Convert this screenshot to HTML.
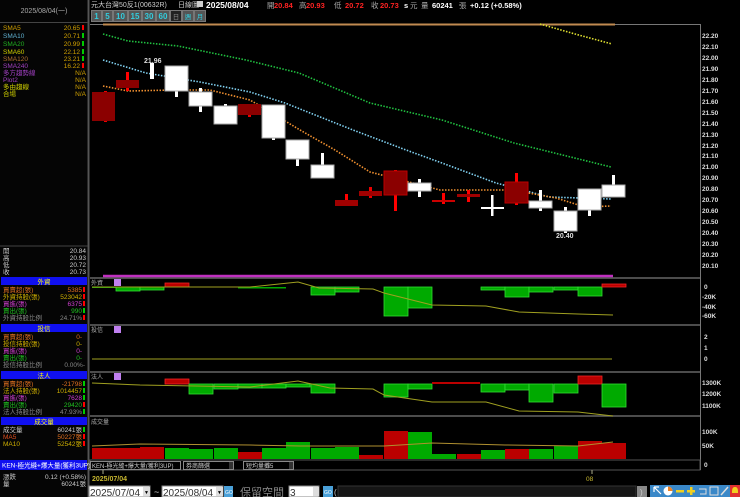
<!DOCTYPE html>
<html><head><meta charset="utf-8">
<style>
html,body{margin:0;padding:0;background:#000;width:740px;height:497px;overflow:hidden}
svg{display:block}
text{font-family:"Liberation Sans","Noto Sans CJK TC",sans-serif}
</style></head><body>
<svg width="740" height="497" viewBox="0 0 740 497" xmlns="http://www.w3.org/2000/svg">
<rect width="740" height="497" fill="#000"/>
<!-- left panel -->
<rect x="0" y="0" width="87" height="497" fill="#050505"/>
<line x1="88.5" y1="0" x2="88.5" y2="497" stroke="#555" stroke-width="2"/>
<line x1="0" y1="22.5" x2="88" y2="22.5" stroke="#444"/>
<text x="44" y="13" font-size="7" fill="#aaa" text-anchor="middle">2025/08/04(一)</text>
<g font-size="6.5">
<text x="3" y="30" fill="#d0a000">SMA5</text><text x="80" y="30" fill="#d0a000" text-anchor="end">20.65</text><rect x="82" y="25" width="2" height="5" fill="#f00"/>
<text x="3" y="38" fill="#60b0d0">SMA10</text><text x="80" y="38" fill="#d0a000" text-anchor="end">20.71</text><rect x="82" y="33" width="2" height="5" fill="#0c0"/>
<text x="3" y="46" fill="#20b020">SMA20</text><text x="80" y="46" fill="#d0a000" text-anchor="end">20.99</text><rect x="82" y="41" width="2" height="5" fill="#0c0"/>
<text x="3" y="54" fill="#d0d000">SMA60</text><text x="80" y="54" fill="#d0a000" text-anchor="end">22.12</text><rect x="82" y="49" width="2" height="5" fill="#0c0"/>
<text x="3" y="61" fill="#b07030">SMA120</text><text x="80" y="61" fill="#d0a000" text-anchor="end">23.21</text><rect x="82" y="56" width="2" height="5" fill="#0c0"/>
<text x="3" y="68" fill="#a040c0">SMA240</text><text x="80" y="68" fill="#d0a000" text-anchor="end">16.22</text><rect x="82" y="63" width="2" height="5" fill="#f00"/>
<text x="3" y="75" fill="#a040c0">多方趨勢線</text><text x="86" y="75" fill="#d0a000" text-anchor="end">N/A</text>
<text x="3" y="82" fill="#a040c0">Plot2</text><text x="86" y="82" fill="#d0a000" text-anchor="end">N/A</text>
<text x="3" y="89" fill="#d0d000">多由趨線</text><text x="86" y="89" fill="#d0a000" text-anchor="end">N/A</text>
<text x="3" y="96" fill="#d0d000">合場</text><text x="86" y="96" fill="#d0a000" text-anchor="end">N/A</text>
</g>
<line x1="0" y1="246" x2="88" y2="246" stroke="#444"/>
<g font-size="6.5" fill="#ccc">
<text x="3" y="253">開</text><text x="86" y="253" text-anchor="end">20.84</text>
<text x="3" y="260">高</text><text x="86" y="260" text-anchor="end">20.93</text>
<text x="3" y="267">低</text><text x="86" y="267" text-anchor="end">20.72</text>
<text x="3" y="274">收</text><text x="86" y="274" text-anchor="end">20.73</text>
</g>
<!-- 外資 -->
<rect x="1" y="277" width="86" height="8" fill="#1010f0"/><text x="44" y="284" font-size="6.5" fill="#ff0" text-anchor="middle">外資</text>
<g font-size="6.5">
<text x="3" y="292" fill="#e07020">買賣超(張)</text><text x="82" y="292" fill="#e07020" text-anchor="end">5385</text><rect x="83" y="287" width="2" height="5" fill="#f00"/>
<text x="3" y="299" fill="#d0b000">外資持股(張)</text><text x="82" y="299" fill="#d0b000" text-anchor="end">523042</text><rect x="83" y="294" width="2" height="5" fill="#f00"/>
<text x="3" y="306" fill="#d040d0">買進(張)</text><text x="82" y="306" fill="#d040d0" text-anchor="end">6375</text><rect x="83" y="301" width="2" height="5" fill="#f00"/>
<text x="3" y="313" fill="#20c020">賣出(張)</text><text x="82" y="313" fill="#20c020" text-anchor="end">990</text><rect x="83" y="308" width="2" height="5" fill="#0c0"/>
<text x="3" y="320" fill="#888">外資持股比例</text><text x="82" y="320" fill="#888" text-anchor="end">24.71%</text><rect x="83" y="315" width="2" height="5" fill="#f00"/>
</g>
<rect x="1" y="324" width="86" height="8" fill="#1010f0"/><text x="44" y="331" font-size="6.5" fill="#ff0" text-anchor="middle">投信</text>
<g font-size="6.5">
<text x="3" y="339" fill="#e07020">買賣超(張)</text><text x="82" y="339" fill="#e07020" text-anchor="end">0-</text>
<text x="3" y="346" fill="#d0b000">投信持股(張)</text><text x="82" y="346" fill="#d0b000" text-anchor="end">0-</text>
<text x="3" y="353" fill="#d040d0">買進(張)</text><text x="82" y="353" fill="#d040d0" text-anchor="end">0-</text>
<text x="3" y="360" fill="#20c020">賣出(張)</text><text x="82" y="360" fill="#20c020" text-anchor="end">0-</text>
<text x="3" y="367" fill="#888">投信持股比例</text><text x="85" y="367" fill="#888" text-anchor="end">0.00%-</text>
</g>
<rect x="1" y="371" width="86" height="8" fill="#1010f0"/><text x="44" y="378" font-size="6.5" fill="#ff0" text-anchor="middle">法人</text>
<g font-size="6.5">
<text x="3" y="386" fill="#e07020">買賣超(張)</text><text x="82" y="386" fill="#e07020" text-anchor="end">-21798</text><rect x="83" y="381" width="2" height="5" fill="#0c0"/>
<text x="3" y="393" fill="#d0b000">法人持股(張)</text><text x="82" y="393" fill="#d0b000" text-anchor="end">1014457</text><rect x="83" y="388" width="2" height="5" fill="#0c0"/>
<text x="3" y="400" fill="#d040d0">買進(張)</text><text x="82" y="400" fill="#d040d0" text-anchor="end">7628</text><rect x="83" y="395" width="2" height="5" fill="#0c0"/>
<text x="3" y="407" fill="#20c020">賣出(張)</text><text x="82" y="407" fill="#20c020" text-anchor="end">29420</text><rect x="83" y="402" width="2" height="5" fill="#f00"/>
<text x="3" y="414" fill="#888">法人持股比例</text><text x="82" y="414" fill="#888" text-anchor="end">47.93%</text><rect x="83" y="409" width="2" height="5" fill="#0c0"/>
</g>
<rect x="1" y="417" width="86" height="8" fill="#1010f0"/><text x="44" y="424" font-size="6.5" fill="#ff0" text-anchor="middle">成交量</text>
<g font-size="6.5">
<text x="3" y="432" fill="#ccc">成交量</text><text x="82" y="432" fill="#ccc" text-anchor="end">60241張</text><rect x="83" y="427" width="2" height="5" fill="#0c0"/>
<text x="3" y="439" fill="#e05020">MA5</text><text x="82" y="439" fill="#e07020" text-anchor="end">50227張</text><rect x="83" y="434" width="2" height="5" fill="#f00"/>
<text x="3" y="446" fill="#d0b000">MA10</text><text x="82" y="446" fill="#d0b000" text-anchor="end">52542張</text><rect x="83" y="441" width="2" height="5" fill="#f00"/>
</g>
<rect x="0" y="460" width="87" height="10" fill="#1010f0"/>
<text x="2" y="467.5" font-size="6.5" fill="#fff">KEN-極光縫+爆大量(獲利3UP)</text>
<g font-size="6.5" fill="#ccc">
<text x="3" y="479">漲跌</text><text x="86" y="479" text-anchor="end">0.12 (+0.58%)</text>
<text x="3" y="486">量</text><text x="86" y="486" text-anchor="end">60241張</text>
</g>

<!-- top header -->
<text x="91" y="7" font-size="7" fill="#ccc">元大台灣50反1(00632R)</text>
<text x="178" y="7" font-size="7" fill="#ccc">日線圖</text>
<rect x="197" y="1" width="6" height="6" fill="#ccc"/>
<text x="206" y="8" font-size="8.5" font-weight="bold" fill="#fff">2025/08/04</text>
<g font-size="7.5" font-weight="bold">
<text x="267" y="8" fill="#aaa" font-weight="normal">開</text><text x="274" y="8" fill="#f22">20.84</text>
<text x="299" y="8" fill="#aaa" font-weight="normal">高</text><text x="306" y="8" fill="#f22">20.93</text>
<text x="334" y="8" fill="#aaa" font-weight="normal">低</text><text x="345" y="8" fill="#f22">20.72</text>
<text x="371" y="8" fill="#aaa" font-weight="normal">收</text><text x="380" y="8" fill="#f22">20.73</text>
<text x="404" y="8" fill="#fff">s</text><text x="410" y="8" fill="#aaa" font-weight="normal">元</text>
<text x="421" y="8" fill="#aaa" font-weight="normal">量</text><text x="432" y="8" fill="#fff">60241</text>
<text x="459" y="8" fill="#aaa" font-weight="normal">張</text><text x="470" y="8" fill="#fff">+0.12 (+0.58%)</text>
</g>
<!-- period buttons -->
<g font-size="8" font-weight="bold" text-anchor="middle">
<rect x="91" y="10" width="115" height="12" fill="#4a4a4a"/>
<rect x="91.5" y="10.5" width="10" height="11" fill="#555" stroke="#777"/><text x="96.5" y="19" fill="#3cd">1</text>
<rect x="102.5" y="10.5" width="10" height="11" fill="#555" stroke="#777"/><text x="107.5" y="19" fill="#3cd">5</text>
<rect x="113.5" y="10.5" width="14" height="11" fill="#555" stroke="#777"/><text x="120.5" y="19" fill="#3cd">10</text>
<rect x="128.5" y="10.5" width="13" height="11" fill="#555" stroke="#777"/><text x="135" y="19" fill="#3cd">15</text>
<rect x="142.5" y="10.5" width="13" height="11" fill="#555" stroke="#777"/><text x="149" y="19" fill="#3cd">30</text>
<rect x="156.5" y="10.5" width="13" height="11" fill="#555" stroke="#777"/><text x="163" y="19" fill="#3cd">60</text>
<rect x="170.5" y="10.5" width="11" height="11" fill="#222" stroke="#777"/><text x="176" y="19" fill="#888" font-size="6.5" font-weight="normal">日</text>
<rect x="182.5" y="10.5" width="11" height="11" fill="#555" stroke="#777"/><text x="188" y="19" fill="#3cd" font-size="6.5" font-weight="normal">週</text>
<rect x="194.5" y="10.5" width="11" height="11" fill="#555" stroke="#777"/><text x="200" y="19" fill="#3cd" font-size="6.5" font-weight="normal">月</text>
</g>

<!-- chart frames -->
<line x1="90" y1="24.5" x2="700" y2="24.5" stroke="#777"/>
<line x1="103" y1="24.5" x2="615" y2="24.5" stroke="#c08a50" stroke-width="2"/>
<line x1="700.5" y1="24" x2="700.5" y2="470" stroke="#777"/>
<g stroke="#666" stroke-width="1.5">
<line x1="90" y1="278" x2="700" y2="278"/>
<line x1="90" y1="325" x2="700" y2="325"/>
<line x1="90" y1="372" x2="700" y2="372"/>
<line x1="90" y1="416" x2="700" y2="416"/>
</g>
<line x1="103" y1="276" x2="613" y2="276" stroke="#c030c0" stroke-width="2.5"/>
<!-- price axis -->
<g font-size="6.5" fill="#ddd" font-weight="bold">
<text x="702" y="38">22.20</text><text x="702" y="49">22.10</text><text x="702" y="60">22.00</text><text x="702" y="71">21.90</text>
<text x="702" y="82">21.80</text><text x="702" y="93">21.70</text><text x="702" y="104">21.60</text><text x="702" y="115">21.50</text>
<text x="702" y="126">21.40</text><text x="702" y="137">21.30</text><text x="702" y="148">21.20</text><text x="702" y="158">21.10</text>
<text x="702" y="169">21.00</text><text x="702" y="180">20.90</text><text x="702" y="191">20.80</text><text x="702" y="202">20.70</text>
<text x="702" y="213">20.60</text><text x="702" y="224">20.50</text><text x="702" y="235">20.40</text><text x="702" y="246">20.30</text>
<text x="702" y="257">20.20</text><text x="702" y="268">20.10</text>
<text x="704" y="289">0</text><text x="702" y="299">-20K</text><text x="702" y="309">-40K</text><text x="702" y="318">-60K</text>
<text x="704" y="339">2</text><text x="704" y="350">1</text><text x="704" y="361">0</text>
<text x="702" y="385">1300K</text><text x="702" y="396">1200K</text><text x="702" y="408">1100K</text>
<text x="702" y="434">100K</text><text x="702" y="448">50K</text><text x="704" y="467">0</text>
</g>

<!-- MAs -->
<g fill="none" stroke-dasharray="1.5 1.5" stroke-width="1.6">
<polyline stroke="#20c040" points="103,34 128,41 178,46 246,60 299,73 370,103 442,120 514,143 611,167"/>
<polyline stroke="#80d0f0" points="103,60 146,73 200,82 250,92 285,103 353,130 406,150 442,163 496,183 549,197 611,199"/>
<polyline stroke="#f09030" points="103,86 128,91 174,90 210,90 250,100 262,107 300,130 335,150 370,172 440,190 512,190 556,198 585,207 611,206"/>
<polyline stroke="#e0e030" points="540,24 575,34 612,44"/>
</g>

<!-- candles -->
<g>
<rect x="104" y="91" width="3" height="31" fill="#e00"/><rect x="92" y="92" width="23" height="29" fill="#8b0000"/>
<rect x="126" y="72" width="3" height="19" fill="#f00"/><rect x="116" y="80" width="23" height="8" fill="#8b0000"/>
<rect x="150" y="63" width="4" height="16" fill="#fff"/>
<rect x="175" y="66" width="3" height="31" fill="#fff"/><rect x="165" y="66" width="23" height="25" fill="#fff" stroke="#aaa"/>
<rect x="199" y="88" width="3" height="24" fill="#fff"/><rect x="189" y="92" width="23" height="14" fill="#fff" stroke="#aaa"/>
<rect x="224" y="104" width="3" height="4" fill="#fff"/><rect x="214" y="106" width="23" height="18" fill="#fff" stroke="#aaa"/>
<rect x="248" y="104" width="3" height="13" fill="#e00"/><rect x="238" y="104" width="23" height="11" fill="#8b0000"/>
<rect x="272" y="105" width="3" height="35" fill="#fff"/><rect x="262" y="105" width="23" height="33" fill="#fff" stroke="#aaa"/>
<rect x="296" y="140" width="3" height="26" fill="#fff"/><rect x="286" y="140" width="23" height="19" fill="#fff" stroke="#aaa"/>
<rect x="321" y="153" width="3" height="14" fill="#fff"/><rect x="311" y="165" width="23" height="13" fill="#fff" stroke="#aaa"/>
<rect x="345" y="194" width="3" height="8" fill="#f00"/><rect x="335" y="200" width="23" height="6" fill="#a00000"/>
<rect x="369" y="187" width="3" height="11" fill="#e00"/><rect x="359" y="191" width="23" height="5" fill="#a00000"/>
<rect x="394" y="170" width="3" height="41" fill="#f00"/><rect x="384" y="171" width="23" height="24" fill="#8b0000" stroke="#b00"/>
<rect x="418" y="179" width="3" height="18" fill="#fff"/><rect x="408" y="183" width="23" height="8" fill="#fff" stroke="#aaa"/>
<rect x="442" y="193" width="3" height="11" fill="#f00"/><rect x="432" y="200" width="23" height="2" fill="#c00"/>
<rect x="467" y="190" width="3" height="12" fill="#f00"/><rect x="457" y="194" width="23" height="3" fill="#a00000"/>
<rect x="491" y="195" width="2.5" height="21" fill="#fff"/><rect x="481" y="207" width="23" height="2" fill="#fff"/>
<rect x="515" y="173" width="3" height="32" fill="#f00"/><rect x="505" y="182" width="23" height="21" fill="#8b0000" stroke="#b00"/>
<rect x="539" y="190" width="3" height="21" fill="#fff"/><rect x="529" y="201" width="23" height="7" fill="#fff" stroke="#aaa"/>
<rect x="564" y="207" width="3" height="26" fill="#fff"/><rect x="554" y="211" width="23" height="20" fill="#fff" stroke="#aaa"/>
<rect x="588" y="189" width="3" height="27" fill="#fff"/><rect x="578" y="189" width="23" height="21" fill="#fff" stroke="#aaa"/>
<rect x="612" y="175" width="3" height="22" fill="#fff"/><rect x="602" y="185" width="23" height="12" fill="#fff" stroke="#aaa"/>
</g>
<text x="144" y="63" font-size="7" fill="#ddd" font-weight="bold">21.96</text>
<text x="556" y="238" font-size="7" fill="#ddd" font-weight="bold">20.40</text>

<!-- panel 1 外資 -->
<text x="91" y="285" font-size="6" fill="#aaa">外資</text><rect x="114" y="279" width="7" height="7" fill="#c080f0"/>
<g stroke-width="0.8">
<rect x="92" y="287" width="24" height="1" fill="#0a0"/>
<rect x="116" y="287" width="24" height="4" fill="#0a0" stroke="#3d3"/>
<rect x="140" y="287" width="24" height="3" fill="#0a0" stroke="#3d3"/>
<rect x="165" y="283" width="24" height="4" fill="#b00" stroke="#e22"/>
<rect x="238" y="287" width="24" height="1.5" fill="#0a0"/>
<rect x="262" y="287" width="24" height="1.5" fill="#0a0"/>
<rect x="311" y="287" width="24" height="8" fill="#0a0" stroke="#3d3"/>
<rect x="335" y="287" width="24" height="5" fill="#0a0" stroke="#3d3"/>
<rect x="384" y="287" width="24" height="29" fill="#0a0" stroke="#3d3"/>
<rect x="408" y="287" width="24" height="21" fill="#0a0" stroke="#3d3"/>
<rect x="481" y="287" width="24" height="3" fill="#0a0" stroke="#3d3"/>
<rect x="505" y="287" width="24" height="10" fill="#0a0" stroke="#3d3"/>
<rect x="529" y="287" width="24" height="5" fill="#0a0" stroke="#3d3"/>
<rect x="554" y="287" width="24" height="3" fill="#0a0" stroke="#3d3"/>
<rect x="578" y="287" width="24" height="9" fill="#0a0" stroke="#3d3"/>
<rect x="602" y="284" width="24" height="3" fill="#b00" stroke="#e22"/>
</g>
<polyline fill="none" stroke="#a0a020" stroke-width="1" points="92,287 250,287 298,282 319,288 373,289 384,293 432,305 486,306 519,312 578,314 613,315"/>

<!-- panel 2 投信 -->
<text x="91" y="332" font-size="6" fill="#aaa">投信</text><rect x="114" y="326" width="7" height="7" fill="#c080f0"/>
<line x1="92" y1="359" x2="612" y2="359" stroke="#a0a020"/>

<!-- panel 3 法人 -->
<text x="91" y="379" font-size="6" fill="#aaa">法人</text><rect x="114" y="373" width="7" height="7" fill="#c080f0"/>
<g stroke-width="0.8">
<rect x="165" y="379" width="24" height="5" fill="#b00" stroke="#e22"/>
<rect x="189" y="384" width="24" height="10" fill="#0a0" stroke="#3d3"/>
<rect x="214" y="384" width="24" height="5" fill="#0a0" stroke="#3d3"/>
<rect x="238" y="384" width="24" height="4" fill="#0a0" stroke="#3d3"/>
<rect x="262" y="384" width="24" height="4" fill="#0a0" stroke="#3d3"/>
<rect x="286" y="384" width="24" height="3" fill="#0a0" stroke="#3d3"/>
<rect x="311" y="384" width="24" height="9" fill="#0a0" stroke="#3d3"/>
<rect x="384" y="384" width="24" height="13" fill="#0a0" stroke="#3d3"/>
<rect x="408" y="384" width="24" height="5" fill="#0a0" stroke="#3d3"/>
<rect x="432" y="382" width="48" height="2" fill="#b00"/>
<rect x="481" y="384" width="24" height="8" fill="#0a0" stroke="#3d3"/>
<rect x="505" y="384" width="24" height="6" fill="#0a0" stroke="#3d3"/>
<rect x="529" y="384" width="24" height="18" fill="#0a0" stroke="#3d3"/>
<rect x="554" y="384" width="24" height="9" fill="#0a0" stroke="#3d3"/>
<rect x="578" y="376" width="24" height="8" fill="#b00" stroke="#e22"/>
<rect x="602" y="384" width="24" height="23" fill="#0a0" stroke="#3d3"/>
</g>
<polyline fill="none" stroke="#a0a020" stroke-width="1" points="92,383 140,385 250,387 298,381 330,388 373,389 384,395 432,402 486,402 519,411 578,412 613,416"/>

<!-- panel 4 成交量 -->
<text x="91" y="424" font-size="6" fill="#aaa">成交量</text>
<g>
<rect x="92" y="448" width="24" height="11" fill="#b00"/>
<rect x="116" y="448" width="24" height="11" fill="#b00"/>
<rect x="140" y="447" width="24" height="12" fill="#b00"/>
<rect x="165" y="448" width="24" height="11" fill="#0a0"/>
<rect x="189" y="449" width="24" height="10" fill="#0a0"/>
<rect x="214" y="448" width="24" height="11" fill="#0a0"/>
<rect x="238" y="452" width="24" height="7" fill="#b00"/>
<rect x="262" y="448" width="24" height="11" fill="#0a0"/>
<rect x="286" y="442" width="24" height="17" fill="#0a0"/>
<rect x="311" y="448" width="24" height="11" fill="#0a0"/>
<rect x="335" y="447" width="24" height="12" fill="#0a0"/>
<rect x="359" y="455" width="24" height="4" fill="#b00"/>
<rect x="384" y="431" width="24" height="28" fill="#b00"/>
<rect x="408" y="432" width="24" height="27" fill="#0a0"/>
<rect x="432" y="454" width="24" height="5" fill="#0a0"/>
<rect x="457" y="454" width="24" height="5" fill="#b00"/>
<rect x="481" y="450" width="24" height="9" fill="#0a0"/>
<rect x="505" y="449" width="24" height="10" fill="#b00"/>
<rect x="529" y="449" width="24" height="10" fill="#0a0"/>
<rect x="554" y="446" width="24" height="13" fill="#0a0"/>
<rect x="578" y="441" width="24" height="18" fill="#b00"/>
<rect x="602" y="443" width="24" height="16" fill="#b00"/>
</g>
<polyline fill="none" stroke="#b09030" stroke-width="1" points="92,446 140,444 250,445 300,446 384,446 432,443 505,445 578,446 613,442"/>

<!-- KEN row -->
<rect x="90" y="460" width="610" height="10" fill="#000" stroke="#555"/>
<rect x="90.5" y="461.5" width="90" height="8" fill="#000" stroke="#888"/>
<text x="92" y="468" font-size="6" fill="#ccc">KEN-極光縫+爆大量(獲利3UP)</text>
<rect x="183.5" y="461.5" width="50" height="8" fill="#000" stroke="#888"/>
<text x="186" y="468" font-size="6" fill="#ccc">券商篩選</text><rect x="229" y="462" width="4" height="7" fill="#333"/>
<rect x="243.5" y="461.5" width="50" height="8" fill="#000" stroke="#888"/>
<text x="246" y="468" font-size="6" fill="#ccc">短均量攤5</text><rect x="289" y="462" width="4" height="7" fill="#333"/>
<line x1="103" y1="470" x2="103" y2="474" stroke="#aa8"/>
<line x1="592" y1="470" x2="592" y2="474" stroke="#aa8"/>
<text x="92" y="481" font-size="7" fill="#c8b830" font-weight="bold">2025/07/04</text>
<text x="586" y="481" font-size="6.5" fill="#c8b830">08</text>

<!-- bottom controls -->
<rect x="89" y="486" width="61" height="11" fill="#fff" stroke="#888"/>
<text x="90" y="496" font-size="10" fill="#333">2025/07/04</text>
<rect x="143" y="487" width="7" height="9" fill="#ddd"/><text x="144" y="494" font-size="5" fill="#000">▼</text>
<text x="154" y="495" font-size="9" fill="#ccc">~</text>
<rect x="162" y="486" width="61" height="11" fill="#fff" stroke="#888"/>
<text x="163" y="496" font-size="10" fill="#333">2025/08/04</text>
<rect x="216" y="487" width="7" height="9" fill="#ddd"/><text x="217" y="494" font-size="5" fill="#000">▼</text>
<rect x="224" y="486" width="9" height="11" fill="#4aa0d8"/><text x="225" y="494" font-size="5" fill="#fff">GO</text>
<text x="240" y="496" font-size="11" fill="#888" font-family="Liberation Serif,'Noto Serif CJK SC',serif">保留空間</text>
<rect x="289" y="486" width="30" height="11" fill="#fff" stroke="#888"/>
<text x="290" y="496" font-size="10" fill="#333">3</text>
<rect x="313" y="487" width="6" height="9" fill="#ddd"/>
<rect x="323" y="486" width="10" height="11" fill="#4aa0d8"/><text x="324" y="494" font-size="5" fill="#fff">GO</text>
<text x="334" y="495" font-size="8" fill="#ccc">(</text>
<rect x="338" y="486" width="298" height="11" fill="#151515" stroke="#333"/>
<rect x="637" y="486" width="10" height="11" fill="#888"/>
<text x="640" y="495" font-size="8" fill="#ccc">)</text>
<g>
<rect x="650" y="485" width="90" height="12" fill="#3a88c8"/>
<path d="M654 487 L654 492 M654 487 L659 487 M654 487 L661 494" stroke="#fff" stroke-width="1.2" fill="none"/>
<circle cx="668" cy="491" r="4.5" fill="#fff"/><path d="M668 491 L668 486.5 A4.5 4.5 0 0 1 672.5 491 Z" fill="#f08020"/>
<rect x="676" y="490" width="8" height="2.5" fill="#f0d020"/>
<rect x="687" y="490" width="8" height="2.5" fill="#f0d020"/><rect x="690" y="487" width="2.5" height="8" fill="#f0d020"/>
<path d="M699 489 L706 489 L706 494 L700 494" stroke="#ddd" fill="none"/>
<rect x="710" y="487" width="8" height="8" fill="none" stroke="#ddd"/>
<path d="M721 495 L728 487" stroke="#ddd" stroke-width="1.5"/>
<rect x="730" y="485" width="10" height="12" fill="#e03030"/>
<path d="M735 487 C732 487 732 490 732 493 L738 493 C738 490 738 487 735 487 Z" fill="#f0d020"/>
</g>
</svg>
</body></html>
